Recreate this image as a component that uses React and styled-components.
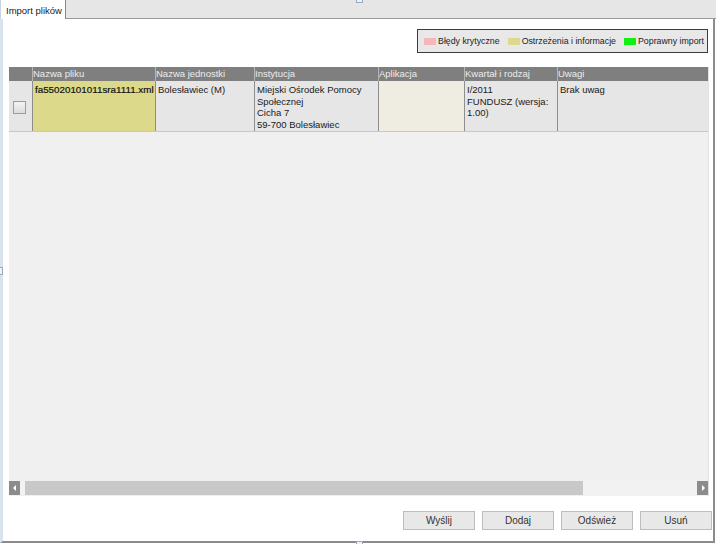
import React from 'react';
import styled, { createGlobalStyle } from 'styled-components';

const GlobalStyle = createGlobalStyle`
  html, body {
    margin: 0;
    padding: 0;
    background: #ffffff;
  }
  body {
    font-family: 'Liberation Sans', Arial, sans-serif;
  }
`;

const columns = [
  { key: 'check', title: '', width: 24 },
  { key: 'file', title: 'Nazwa pliku', width: 123 },
  { key: 'unit', title: 'Nazwa jednostki', width: 99 },
  { key: 'inst', title: 'Instytucja', width: 124 },
  { key: 'app', title: 'Aplikacja', width: 86 },
  { key: 'period', title: 'Kwartał i rodzaj', width: 93 },
  { key: 'notes', title: 'Uwagi', width: 150 },
];

const gridCols = columns.map(c => c.width + 'px').join(' ');

const legend = [
  { color: '#f5b8ba', label: 'Błędy krytyczne' },
  { color: '#dcd98f', label: 'Ostrzeżenia i informacje' },
  { color: '#12f012', label: 'Poprawny import' },
];

const row = {
  file: 'fa55020101011sra1111.xml',
  unit: 'Bolesławiec (M)',
  inst: ['Miejski Ośrodek Pomocy', 'Społecznej', 'Cicha 7', '59-700 Bolesławiec'],
  app: '',
  period: ['I/2011', 'FUNDUSZ (wersja:', '1.00)'],
  notes: 'Brak uwag',
};

const buttons = ['Wyślij', 'Dodaj', 'Odśwież', 'Usuń'];

const App = () => {
  return (
    <>
      <GlobalStyle />
      <Window>
        <TabBar>
          <Tab>Import plików</Tab>
          <Handle />
        </TabBar>

        <Panel>
          <SideHandle />
          <LegendRow>
            <Legend>
              {legend.map(item => (
                <LegendItem key={item.label}>
                  <Swatch color={item.color} />
                  {item.label}
                </LegendItem>
              ))}
            </Legend>
          </LegendRow>

          <Grid>
            <HeaderRow>
              {columns.map(c => (
                <HeaderCell key={c.key}>{c.title}</HeaderCell>
              ))}
            </HeaderRow>

            <DataRow>
              <Cell>
                <CheckBox />
              </Cell>
              <Cell $bg="#dcd98a"><FileName>{row.file}</FileName></Cell>
              <Cell>{row.unit}</Cell>
              <Cell>
                {row.inst.map(l => <Line key={l}>{l}</Line>)}
              </Cell>
              <Cell $bg="#efede1" />
              <Cell>
                {row.period.map(l => <Line key={l}>{l}</Line>)}
              </Cell>
              <Cell $last>{row.notes}</Cell>
            </DataRow>

            <Empty />

            <ScrollBar>
              <ScrollButton>
                <Arrow viewBox="0 0 4 6"><path d="M3 0 L0 3 L3 6 Z" fill="#fff" /></Arrow>
              </ScrollButton>
              <Track>
                <Thumb />
              </Track>
              <ScrollButton>
                <Arrow viewBox="0 0 4 6"><path d="M1 0 L4 3 L1 6 Z" fill="#fff" /></Arrow>
              </ScrollButton>
            </ScrollBar>
          </Grid>

          <ButtonRow>
            {buttons.map(b => (
              <Button key={b}>{b}</Button>
            ))}
          </ButtonRow>
          <BottomHandle />
        </Panel>
      </Window>
    </>
  );
};

const Window = styled.div`
  width: 716px;
  height: 544px;
  display: flex;
  flex-direction: column;
  background: #ffffff;
  overflow: hidden;
`;

const TabBar = styled.div`
  position: relative;
  height: 18px;
  flex: none;
  display: flex;
  align-items: flex-end;
  background: #e6e6e6;
  border-bottom: 1px solid #9a9a9a;
`;

const Tab = styled.div`
  height: 18px;
  margin-bottom: -1px;
  padding: 1px 3px 0 5px;
  display: flex;
  align-items: center;
  background: #ffffff;
  border-right: 1px solid #8a8a8a;
  border-left: 1px solid #c8d4e2;
  font-size: 9.5px;
  color: #222;
  white-space: nowrap;
`;

const Handle = styled.div`
  position: absolute;
  left: 356px;
  top: 0;
  width: 5px;
  height: 2px;
  border: 1px solid #9aa8c0;
  border-top: none;
  background: #eef2f8;
`;

const Panel = styled.div`
  position: relative;
  flex: 1;
  display: flex;
  flex-direction: column;
  border-left: 3px solid #d9e3ee;
  border-right: 2px solid #8c8c8c;
  border-bottom: 2px solid #8c8c8c;
  padding: 10px 3px 0 6px;
  margin-right: 1px;
  margin-bottom: 1px;
`;

const SideHandle = styled.div`
  position: absolute;
  left: -3px;
  top: 248px;
  width: 2px;
  height: 6px;
  border: 1px solid #9aa8c0;
  border-left: none;
  background: #eef2f8;
`;

const BottomHandle = styled.div`
  position: absolute;
  left: 353px;
  bottom: -3px;
  width: 5px;
  height: 2px;
  border: 1px solid #9aa8c0;
  border-bottom: none;
  background: #eef2f8;
`;

const LegendRow = styled.div`
  display: flex;
  justify-content: flex-end;
  padding-right: 2px;
`;

const Legend = styled.div`
  display: flex;
  align-items: center;
  gap: 8px;
  height: 22px;
  padding: 0 3px 0 6px;
  background: #e8e8e8;
  border: 1px solid #3c3c3c;
  font-size: 8.8px;
  color: #222;
`;

const LegendItem = styled.div`
  display: flex;
  align-items: center;
  gap: 2px;
  white-space: nowrap;
`;

const Swatch = styled.span`
  display: inline-block;
  width: 12px;
  height: 7px;
  background: ${p => p.color};
`;

const Grid = styled.div`
  margin-top: 14px;
  width: 699px;
  height: 429px;
  display: flex;
  flex-direction: column;
  background: #f0f0f0;
  border-right: 1px solid #e2e2e2;
`;

const HeaderRow = styled.div`
  display: grid;
  grid-template-columns: ${gridCols};
  height: 14px;
  background: #7f7f7f;
`;

const HeaderCell = styled.div`
  border-right: 1px solid #b4b4b4;
  font-size: 9.5px;
  line-height: 14px;
  color: #ececec;
  white-space: nowrap;
  overflow: hidden;

  &:last-child {
    border-right: none;
  }
`;

const DataRow = styled.div`
  display: grid;
  grid-template-columns: ${gridCols};
  height: 50px;
  background: #e6e6e6;
  border-bottom: 1px solid #c8c8c8;
`;

const Cell = styled.div`
  background: ${p => p.$bg || 'transparent'};
  border-right: ${p => (p.$last ? 'none' : '1px solid #8e8e8e')};
  padding: 3px 2px 0 2px;
  font-size: 9.5px;
  line-height: 11.5px;
  color: #1a1a1a;
  overflow: hidden;
`;

const FileName = styled.span`
  color: #111;
  font-size: 9.8px;
  -webkit-text-stroke: 0.2px #111;
`;

const Line = styled.div`
  white-space: nowrap;
`;

const CheckBox = styled.div`
  width: 11px;
  height: 11px;
  margin: 17px 0 0 2px;
  border: 1px solid #9c9c9c;
  background: linear-gradient(#f4f4f4, #dcdcdc);
`;

const Empty = styled.div`
  flex: 1;
`;

const ScrollBar = styled.div`
  height: 14px;
  display: flex;
  align-items: stretch;
  margin-bottom: 1px;
  background: #f2f2f2;
`;

const ScrollButton = styled.div`
  width: 11px;
  display: flex;
  align-items: center;
  justify-content: center;
  background: #8c8c8c;
`;

const Arrow = styled.svg`
  width: 4px;
  height: 6px;
`;

const Track = styled.div`
  flex: 1;
  padding-left: 5px;
  background: #f2f2f2;
`;

const Thumb = styled.div`
  width: 558px;
  height: 100%;
  background: #c8c8c8;
`;

const ButtonRow = styled.div`
  display: flex;
  justify-content: flex-end;
  gap: 7px;
  margin-top: 15px;
  margin-right: -2px;
`;

const Button = styled.div`
  width: 70px;
  height: 17px;
  display: flex;
  align-items: center;
  justify-content: center;
  background: #e8e8e8;
  border: 1px solid #bdbdbd;
  font-size: 10px;
  color: #333;
`;

export default App;
